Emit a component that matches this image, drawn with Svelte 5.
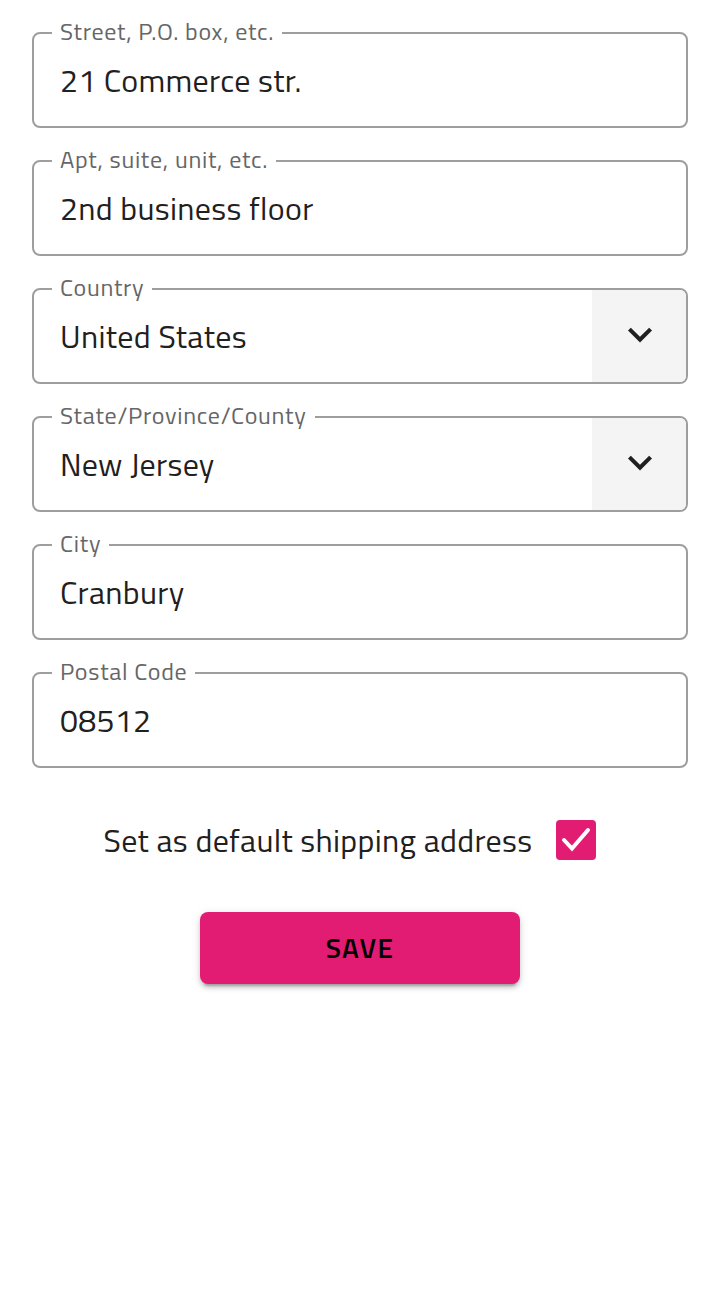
<script>
  let street = $state('21 Commerce str.');
  let unit = $state('2nd business floor');
  let country = $state('United States');
  let region = $state('New Jersey');
  let city = $state('Cranbury');
  let postal = $state('08512');
  let isDefault = $state(true);
</script>

{#snippet chevron()}
  <svg class="chevron" viewBox="0 0 24 24" aria-hidden="true">
    <path d="M7.41 7.84L12 12.42l4.59-4.58L18 9.25l-6 6-6-6z" fill="currentColor" />
  </svg>
{/snippet}

<form onsubmit={(event) => event.preventDefault()}>
  <fieldset>
    <legend><label for="street">Street, P.O. box, etc.</label></legend>
    <div class="control"><input id="street" type="text" bind:value={street} /></div>
  </fieldset>

  <fieldset>
    <legend><label for="unit">Apt, suite, unit, etc.</label></legend>
    <div class="control"><input id="unit" type="text" bind:value={unit} /></div>
  </fieldset>

  <fieldset>
    <legend><label for="country">Country</label></legend>
    <div class="control">
      <span class="arrow">{@render chevron()}</span>
      <select id="country" bind:value={country}>
        <option>United States</option>
      </select>
    </div>
  </fieldset>

  <fieldset>
    <legend><label for="region">State/Province/County</label></legend>
    <div class="control">
      <span class="arrow">{@render chevron()}</span>
      <select id="region" bind:value={region}>
        <option>New Jersey</option>
      </select>
    </div>
  </fieldset>

  <fieldset>
    <legend><label for="city">City</label></legend>
    <div class="control"><input id="city" type="text" bind:value={city} /></div>
  </fieldset>

  <fieldset>
    <legend><label for="postal">Postal Code</label></legend>
    <div class="control"><input id="postal" type="text" bind:value={postal} /></div>
  </fieldset>

  <div class="default-row">
    <label for="default">Set as default shipping address</label>
    <span class="tick">
      <input id="default" type="checkbox" bind:checked={isDefault} />
      {#if isDefault}
        <svg viewBox="0 0 40 40" aria-hidden="true">
          <path d="M8 20l8 8.5L32 10" fill="none" stroke="#fff" stroke-width="4" stroke-linecap="round" />
        </svg>
      {/if}
    </span>
  </div>

  <button type="submit">SAVE</button>
</form>

<style>
  :global(body) {
    margin: 0;
    background: #fff;
    color: #1f2020;
    font-family: 'Titillium Web', 'Noto Sans', sans-serif;
    letter-spacing: 0.01em;
  }

  form {
    display: flex;
    flex-direction: column;
    gap: 16px;
    padding: 16px 32px 32px;
  }

  fieldset {
    min-width: 0;
    margin: 0;
    padding: 0;
    border: 2px solid #9e9e9e;
    border-radius: 8px;
  }

  legend {
    margin-left: 18px;
    padding: 0 8px 4px;
    color: #666;
    font-size: 24px;
    line-height: 30px;
    letter-spacing: 0.03em;
  }

  .control {
    display: grid;
    grid-template-columns: minmax(0, 1fr) 94px;
    height: 92px;
    margin-top: -16px;
  }

  .control input,
  .control select {
    grid-area: 1 / 1 / 2 / 3;
    min-width: 0;
    margin: 0;
    padding: 4px 26px;
    border: 0;
    border-radius: 6px;
    outline: 0;
    appearance: none;
    background: transparent;
    color: inherit;
    font: inherit;
    font-size: 32px;
    letter-spacing: 0.01em;
  }

  .control select {
    padding-right: 120px;
  }

  .arrow {
    grid-area: 1 / 2;
    display: grid;
    place-items: center;
    padding-left: 2px;
    border-radius: 0 6px 6px 0;
    background: #f4f4f4;
  }

  .chevron {
    width: 48px;
    height: 48px;
  }

  .default-row {
    display: flex;
    justify-content: center;
    align-items: center;
    gap: 4px;
    margin-top: 16px;
    font-size: 32px;
    line-height: 80px;
    letter-spacing: 0.01em;
  }

  .tick {
    display: grid;
    flex: none;
    padding: 20px;
  }

  .tick input {
    grid-area: 1 / 1;
    width: 40px;
    height: 40px;
    margin: 0;
    border: 4px solid #757575;
    border-radius: 4px;
    appearance: none;
  }

  .tick input:checked {
    border-color: #e21b73;
    background: #e21b73;
  }

  .tick svg {
    grid-area: 1 / 1;
    width: 40px;
    height: 40px;
    pointer-events: none;
  }

  button {
    align-self: center;
    width: 320px;
    max-width: 100%;
    height: 72px;
    margin-top: 16px;
    padding: 0 0 2px;
    border: 0;
    border-radius: 8px;
    background: #e21b73;
    box-shadow:
      0 6px 2px -4px rgba(0, 0, 0, 0.2),
      0 4px 4px rgba(0, 0, 0, 0.14),
      0 2px 10px rgba(0, 0, 0, 0.12);
    color: #000;
    font: inherit;
    font-size: 28px;
    font-weight: 600;
    letter-spacing: 0.05em;
  }
</style>
